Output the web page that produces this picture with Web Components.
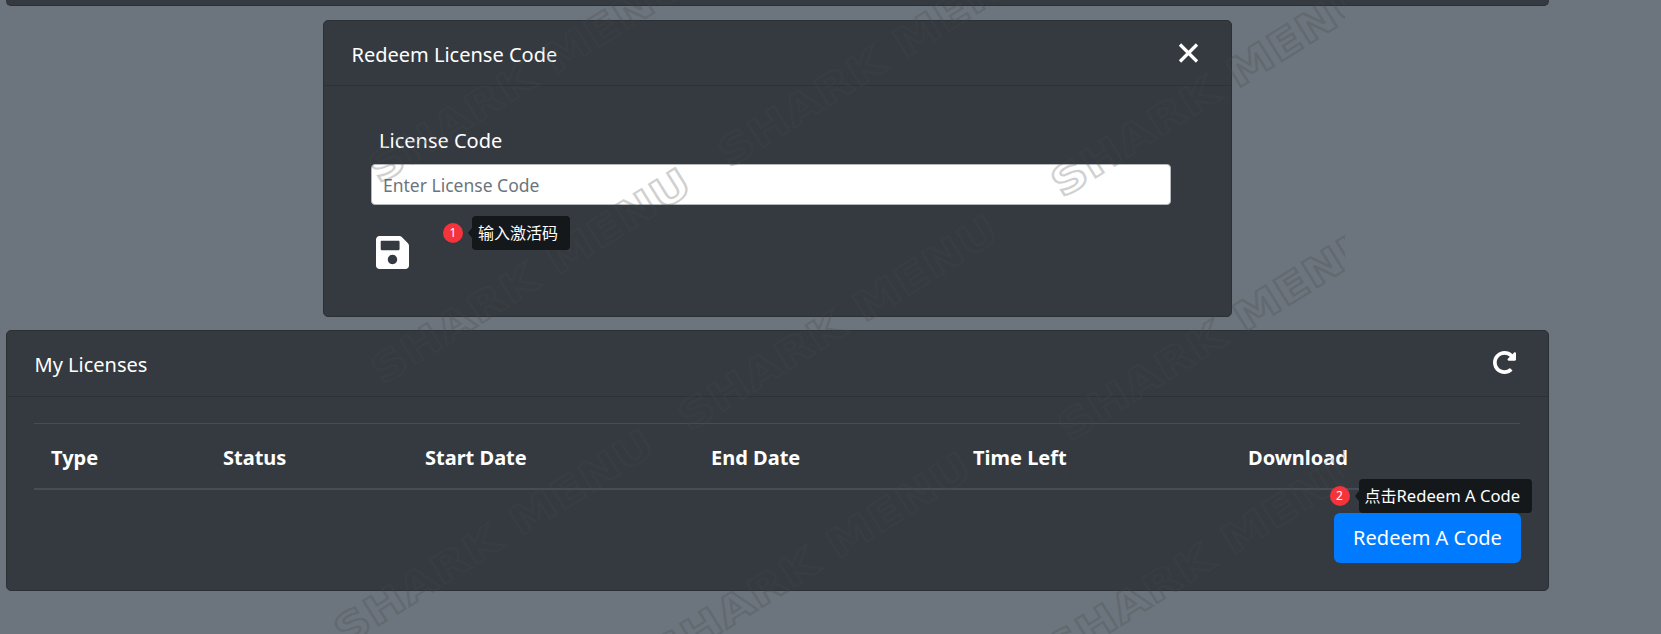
<!DOCTYPE html>
<html lang="en">
<head>
<meta charset="utf-8">
<title>Redeem License Code</title>
<style>
html, body { margin: 0; height: 634px; overflow: hidden; background: #6c757d; }
body { font-family: "Noto Sans", "Noto Sans CJK SC", sans-serif; color: #fff; }
</style>
</head>
<body>
<license-page>
    <cut-card></cut-card>
    <redeem-modal heading="Redeem License Code">
        <license-form label="License Code" placeholder="Enter License Code"></license-form>
    </redeem-modal>
    <license-card heading="My Licenses">
        <license-table></license-table>
        <redeem-button>Redeem A Code</redeem-button>
    </license-card>
    <water-mark></water-mark>
</license-page>
<script>
class licensePage extends HTMLElement {
    constructor() {
        super()
        this.attachShadow({ mode: 'open' });
    }
    connectedCallback() {
        this.shadowRoot.innerHTML = `
            <style>
                :host { display: flex; flex-direction: column; align-items: center; position: relative; width: 1543px; height: 634px; margin-left: 6px; }
            </style>
            <slot></slot>
        `;
    }
}

class cutCard extends HTMLElement {
    constructor() {
        super()
        this.attachShadow({ mode: 'open' });
    }
    connectedCallback() {
        this.shadowRoot.innerHTML = `
            <style>
                :host { display: block; box-sizing: border-box; width: 100%; height: 6px; background: #343a40; border-bottom: 1px solid #2b3035; border-radius: 0 0 5px 5px; }
            </style>
        `;
    }
}

const panelStyles = `
    .head { box-sizing: border-box; display: flex; align-items: center; justify-content: space-between; padding: 0 32px 0 27.5px; border-bottom: 1px solid #2d3237; }
    .head h5 { margin: 0; font-size: 20px; font-weight: 400; line-height: 28px; }
`;

class redeemModal extends HTMLElement {
    constructor() {
        super()
        this.attachShadow({ mode: 'open' });
    }
    connectedCallback() {
        this.shadowRoot.innerHTML = `
            <style>
                :host { display: block; box-sizing: border-box; width: 909px; height: 297px; margin-top: 14px; background: #343a40; border: 1px solid #2b3035; border-radius: 5px; }
                ${panelStyles}
                .head { height: 65px; }
                .head h5 { padding-top: 3px; }
                svg { display: block; width: 21px; height: 20px; }
            </style>
            <div class="head">
                <h5>${this.getAttribute('heading')}</h5>
                <svg viewBox="0 0 21 20"><path d="M2 1.5 19 18.5M19 1.5 2 18.5" stroke="#fff" stroke-width="3.2" fill="none"/></svg>
            </div>
            <slot></slot>
        `;
    }
}

class licenseForm extends HTMLElement {
    constructor() {
        super()
        this.attachShadow({ mode: 'open' });
    }
    connectedCallback() {
        this.shadowRoot.innerHTML = `
            <style>
                :host { display: block; padding: 41px 60px 0 47px; }
                label { display: block; margin-left: 8px; font-size: 20px; line-height: 28px; margin-bottom: 9px; }
                input { display: block; box-sizing: border-box; width: 100%; height: 41px; padding: 0 11px; border: 1px solid #b4b8bc; border-radius: 4px; background: #fff; font: 17.5px "Noto Sans", sans-serif; outline: none; }
                input::placeholder { color: #6c757d; opacity: 1; }
                .actions { position: relative; margin: 31px 0 0 5px; width: 33px; height: 33px; }
                .actions svg { display: block; width: 33px; height: 33px; }
                step-tip { position: absolute; left: 67px; top: -20px; }
            </style>
            <label>${this.getAttribute('label')}</label>
            <input placeholder="${this.getAttribute('placeholder')}">
            <div class="actions">
                <svg viewBox="0 32 448 448"><path fill="#fff" d="M433.941 129.941l-83.882-83.882A48 48 0 0 0 316.118 32H48C21.49 32 0 53.49 0 80v352c0 26.51 21.49 48 48 48h352c26.51 0 48-21.49 48-48V163.882a48 48 0 0 0-14.059-33.941zM224 416c-35.346 0-64-28.654-64-64 0-35.346 28.654-64 64-64s64 28.654 64 64c0 35.346-28.654 64-64 64zm96-304.52V212c0 6.627-5.373 12-12 12H76c-6.627 0-12-5.373-12-12V108c0-6.627 5.373-12 12-12h228.52c3.183 0 6.235 1.264 8.485 3.515l3.48 3.48A11.996 11.996 0 0 1 320 111.48z"/></svg>
                <step-tip number="1">输入激活码</step-tip>
            </div>
        `;
    }
}

class stepTip extends HTMLElement {
    constructor() {
        super()
        this.attachShadow({ mode: 'open' });
    }
    connectedCallback() {
        this.shadowRoot.innerHTML = `
            <style>
                :host { display: flex; align-items: center; z-index: 10; white-space: nowrap; }
                .badge { width: 20px; height: 20px; border-radius: 50%; background: #f4333a; font-size: 12px; line-height: 20px; text-align: center; }
                .arrow { width: 0; height: 0; margin-left: 5px; border: 5px solid transparent; border-left: 0; border-right: 4px solid #14181b; }
                .bubble { box-sizing: border-box; height: 34px; padding: 0 12px 0 6px; background: #14181b; border-radius: 4px; font-size: 16px; line-height: 34px; }
                ::slotted(span) { font-size: 16.6px; }
            </style>
            <span class="badge">${this.getAttribute('number')}</span>
            <span class="arrow"></span>
            <span class="bubble"><slot></slot></span>
        `;
    }
}

class licenseCard extends HTMLElement {
    constructor() {
        super()
        this.attachShadow({ mode: 'open' });
    }
    connectedCallback() {
        this.shadowRoot.innerHTML = `
            <style>
                :host { display: block; box-sizing: border-box; width: 100%; height: 261px; margin-top: 13px; background: #343a40; border: 1px solid #2b3035; border-radius: 5px; }
                ${panelStyles}
                .head { height: 66px; }
                .head h5 { padding-top: 2px; }
                svg { display: block; width: 23px; height: 23px; margin-top: -3px; }
                .body { padding: 26px 28px 0 27px; }
            </style>
            <div class="head">
                <h5>${this.getAttribute('heading')}</h5>
                <svg viewBox="8 8 496 496"><path fill="#fff" d="M256.455 8c66.269.119 126.437 26.233 170.859 68.685l35.715-35.715C478.149 25.851 504 36.559 504 57.941V192c0 13.255-10.745 24-24 24H345.941c-21.382 0-32.09-25.851-16.971-40.971l41.75-41.75c-30.864-28.899-70.801-44.907-113.23-45.273-92.398-.798-170.283 73.977-169.484 169.442C88.764 348.009 162.184 424 256 424c41.127 0 79.997-14.678 110.629-41.556 4.743-4.161 11.906-3.908 16.368.553l39.662 39.662c4.872 4.872 4.631 12.815-.482 17.433C378.202 479.813 319.926 504 256 504 119.034 504 8.001 392.967 8 256.002 7.999 119.193 119.646 7.755 256.455 8z"/></svg>
            </div>
            <div class="body"><slot></slot></div>
        `;
    }
}

class licenseTable extends HTMLElement {
    constructor() {
        super()
        this.attachShadow({ mode: 'open' });
    }
    connectedCallback() {
        const columns = [['Type', 173], ['Status', 202], ['Start Date', 286], ['End Date', 262], ['Time Left', 275], ['Download', 288]];
        this.shadowRoot.innerHTML = `
            <style>
                :host { display: block; }
                table { width: 1486px; table-layout: fixed; border-collapse: collapse; border-top: 1px solid #454d55; border-bottom: 2px solid #454d55; }
                th { height: 65px; padding: 4px 0 0 16px; box-sizing: border-box; text-align: left; font-size: 20px; font-weight: 700; }
                th:first-child { padding-left: 17px; }
            </style>
            <table>
                <colgroup>${columns.map(c => `<col style="width:${c[1]}px">`).join('')}</colgroup>
                <thead><tr>${columns.map(c => `<th>${c[0]}</th>`).join('')}</tr></thead>
            </table>
        `;
    }
}

class redeemButton extends HTMLElement {
    constructor() {
        super()
        this.attachShadow({ mode: 'open' });
    }
    connectedCallback() {
        this.shadowRoot.innerHTML = `
            <style>
                :host { display: flex; justify-content: flex-end; margin: 23px -1px 0 0; }
                .wrap { position: relative; z-index: 10; }
                button { display: block; width: 187px; height: 50px; padding: 0; border: 0; border-radius: 6px; background: #007bff; color: #fff; font: 20px "Noto Sans", sans-serif; }
                step-tip { position: absolute; right: -11px; bottom: 100%; }
            </style>
            <div class="wrap">
                <step-tip number="2">点击<span>Redeem A Code</span></step-tip>
                <button><slot></slot></button>
            </div>
        `;
    }
}

class waterMark extends HTMLElement {
    constructor() {
        super()
        this.attachShadow({ mode: 'open' });
    }
    connectedCallback() {
        // centre of the S of every stamp
        const stamps = [[387, 163], [737, 147], [1070, 177], [390, 364], [697, 411], [1077, 421], [353, 625], [670, 648], [1065, 644]];
        this.shadowRoot.innerHTML = `
            <style>
                :host { position: absolute; left: -6px; top: 0; width: 1345px; height: 634px; overflow: hidden; pointer-events: none; z-index: 5; }
                span { position: absolute; height: 44px; margin: -22px 0 0 -15px; transform-origin: 15px 22px; transform: rotate(-32deg) scaleX(1.2); white-space: nowrap; font: 700 40px/44px "DejaVu Sans", sans-serif; letter-spacing: .5px; color: transparent; -webkit-text-stroke: 2.2px rgba(70, 70, 70, .25); }
            </style>
            ${stamps.map(s => `<span style="left:${s[0]}px;top:${s[1]}px">SHARK MENU</span>`).join('')}
        `;
    }
}

customElements.define('license-page', licensePage);
customElements.define('cut-card', cutCard);
customElements.define('redeem-modal', redeemModal);
customElements.define('license-form', licenseForm);
customElements.define('step-tip', stepTip);
customElements.define('license-card', licenseCard);
customElements.define('license-table', licenseTable);
customElements.define('redeem-button', redeemButton);
customElements.define('water-mark', waterMark);
</script>
</body>
</html>
